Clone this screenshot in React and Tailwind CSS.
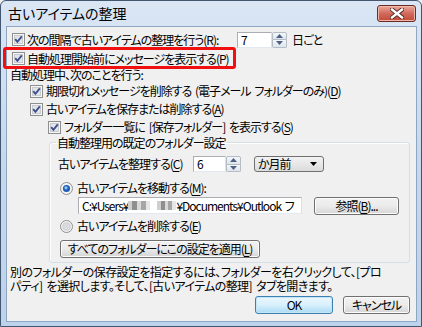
import React from 'react';

function Check() {
  return (
    <svg width="13" height="13" viewBox="0 0 13 13" className="shrink-0">
      <rect x="0.5" y="0.5" width="12" height="12" fill="#f6f6f6" stroke="#8e8f8f" />
      <rect x="2.5" y="2.5" width="8" height="8" fill="#e2e4e8" stroke="#c8cad0" />
      <path d="M3.2 6.2 L5.4 8.8 L9.8 3.4" stroke="#3d4f8d" strokeWidth="1.9" fill="none" />
    </svg>
  );
}

function Radio({ on }) {
  return (
    <svg width="13" height="13" viewBox="0 0 13 13" className="shrink-0">
      <circle cx="6.5" cy="6.5" r="6" fill="#f4f4f4" stroke="#8e8f8f" />
      {on ? (
        <>
          <circle cx="6.5" cy="6.5" r="3.6" fill="#1f5fb8" />
          <circle cx="6" cy="5.8" r="1.6" fill="#8fc4f4" />
        </>
      ) : (
        <circle cx="6.5" cy="6.5" r="4" fill="#d9dbde" stroke="#c4c6ca" strokeWidth="0.6" />
      )}
    </svg>
  );
}

function Spin() {
  return (
    <div className="flex flex-col w-[15px] h-[16px] shrink-0">
      <div className="flex-1 flex items-center justify-center border border-[#b4bcc6] rounded-t-[2px] bg-gradient-to-b from-[#f5f7fa] to-[#dfe5ec]">
        <svg width="7" height="4" viewBox="0 0 7 4"><path d="M0 4 L3.5 0 L7 4 Z" fill="#4d6185" /></svg>
      </div>
      <div className="flex-1 flex items-center justify-center border border-t-0 border-[#b4bcc6] rounded-b-[2px] bg-gradient-to-b from-[#f5f7fa] to-[#dfe5ec]">
        <svg width="7" height="4" viewBox="0 0 7 4"><path d="M0 0 L7 0 L3.5 4 Z" fill="#4d6185" /></svg>
      </div>
    </div>
  );
}

function Btn({ children, className = '', primary }) {
  return (
    <div
      className={
        'flex items-center justify-center h-[18px] rounded-[3px] border text-[12px] leading-[14px] whitespace-nowrap ' +
        (primary
          ? 'border-[#3c7fb1] bg-gradient-to-b from-[#eaf6fd] via-[#d9f0fc] to-[#a9dbf6] shadow-[inset_0_0_0_1px_#c4e5f6] '
          : 'border-[#707070] bg-gradient-to-b from-[#f2f2f2] via-[#ebebeb] to-[#d5d5d5] shadow-[inset_0_0_0_1px_#fcfcfc] ') +
        className
      }
    >
      {children}
    </div>
  );
}

function Mosaic({ w }) {
  return (
    <span
      className="inline-block shrink-0 h-[9px] bg-[linear-gradient(90deg,#cfcfcf_0_20%,#8f8f8f_20%_40%,#d9d9d9_40%_60%,#a6a6a6_60%_80%,#e6e6e6_80%)]"
      style={{ width: w }}
    />
  );
}

export default function App() {
  return (
    <div className="w-[422px] h-[327px] bg-[#f0f0f0] font-['Noto_Sans_CJK_JP',sans-serif] [font-feature-settings:'palt'] text-black">
      <div className="w-[422px] h-[327px] flex flex-col border border-[#425670] rounded-t-[6px] bg-gradient-to-b from-[#dae6f4] via-[#c6d8ee] to-[#bdd2eb]">
        {/* title bar */}
        <div className="h-[25px] shrink-0 flex items-start pl-[7px] pr-[5px]">
          <span className="mt-[4px] text-[14px] leading-[17px]">古いアイテムの整理</span>
          <div className="ml-auto mt-[4px] w-[39px] h-[17px] rounded-[3px] border border-[#6b2a26] bg-gradient-to-b from-[#e9a99b] via-[#d16a5b] to-[#c24a38] shadow-[inset_0_0_0_1px_#f1b8aa] flex items-center justify-center">
            <svg width="14" height="11" viewBox="0 0 14 11">
              <path d="M2 1.5 L12 9.5 M12 1.5 L2 9.5" stroke="#4a2420" strokeWidth="4.2" strokeLinecap="square" />
              <path d="M2 1.5 L12 9.5 M12 1.5 L2 9.5" stroke="#ffffff" strokeWidth="2.4" strokeLinecap="square" />
            </svg>
          </div>
        </div>

        {/* client area */}
        <div className="flex-1 ml-[5px] mr-[4px] mb-[4px] border border-[#8fa6c2] bg-[#f0f0f0] flex flex-col text-[12px] leading-[14px] tracking-[-1px] [word-spacing:2px]">
          {/* row 1 */}
          <div className="mt-[4px] h-[17px] flex items-center pl-[5px]">
            <Check />
            <span className="ml-[2px] w-[210px] whitespace-nowrap">
              次の間隔で古いアイテムの整理を行う(<u className="underline-offset-2">R</u>):
            </span>
            <div className="w-[35px] h-[16px] border border-[#abadb3] border-r-[#dbdfe6] border-b-[#e3e9ef] bg-white pl-[3px] flex items-center">7</div>
            <Spin />
            <span className="ml-[5px]">日ごと</span>
          </div>

          {/* row 2 with highlight */}
          <div className="relative mt-[2px] h-[17px] flex items-center pl-[5px]">
            <Check />
            <span className="ml-[2px] whitespace-nowrap">
              自動処理開始前にメッセージを表示する(<u className="underline-offset-2">P</u>)
            </span>
            <div className="absolute left-[-4px] top-[-3px] w-[233px] h-[22px] border-[3px] border-[#f01010] rounded-[3px]" />
          </div>

          <div className="h-[16px] flex items-center pl-[3px] whitespace-nowrap">自動処理中、次のことを行う:</div>

          <div className="h-[16px] flex items-center pl-[23px]">
            <Check />
            <span className="ml-[3px] whitespace-nowrap">
              期限切れメッセージを削除する (電子メール フォルダーのみ)(<u className="underline-offset-2">D</u>)
            </span>
          </div>

          <div className="mt-[2px] h-[16px] flex items-center pl-[23px]">
            <Check />
            <span className="ml-[3px] whitespace-nowrap">
              古いアイテムを保存または削除する(<u className="underline-offset-2">A</u>)
            </span>
          </div>

          <div className="mt-[2px] h-[16px] flex items-center pl-[41px]">
            <Check />
            <span className="ml-[3px] whitespace-nowrap">
              フォルダー一覧に [保存フォルダー] を表示する(<u className="underline-offset-2">S</u>)
            </span>
          </div>

          {/* group box */}
          <fieldset className="mt-[1px] ml-[42px] w-[361px] h-[127px] border border-[#d5dfe5] rounded-[3px] shadow-[inset_1px_1px_0_#ffffff]">
            <legend className="ml-[6px] px-[1px] h-[13px] leading-[13px] whitespace-nowrap">自動整理用の既定のフォルダー設定</legend>

            <div className="mt-[7px] h-[16px] flex items-center pl-[8px]">
              <span className="w-[135px] whitespace-nowrap">
                古いアイテムを整理する(<u className="underline-offset-2">C</u>)
              </span>
              <div className="w-[33px] h-[16px] border border-[#abadb3] border-r-[#dbdfe6] border-b-[#e3e9ef] bg-white pl-[3px] flex items-center">6</div>
              <Spin />
              <div className="ml-[13px] w-[70px] h-[16px] rounded-[3px] border border-[#707070] bg-gradient-to-b from-[#f2f2f2] to-[#dcdcdc] flex items-center pl-[3px] pr-[6px]">
                <span>か月前</span>
                <svg className="ml-auto" width="7" height="4" viewBox="0 0 7 4"><path d="M0 0 L7 0 L3.5 4 Z" fill="#000" /></svg>
              </div>
            </div>

            <div className="mt-[8px] h-[16px] flex items-center pl-[10px]">
              <Radio on />
              <span className="ml-[4px] whitespace-nowrap">
                古いアイテムを移動する(<u className="underline-offset-2">M</u>):
              </span>
            </div>

            <div className="mt-[1px] h-[17px] flex items-center pl-[28px]">
              <div className="w-[224px] h-[17px] border border-[#abadb3] border-r-[#dbdfe6] border-b-[#e3e9ef] bg-white pl-[3px] flex items-center overflow-hidden whitespace-nowrap">
                <span>C:¥Users¥</span>
                <Mosaic w={22} />
                <span className="w-[7px] shrink-0" />
                <Mosaic w={19} />
                <span>¥Documents¥Outlook フ</span>
              </div>
              <Btn className="ml-[12px] w-[85px]">参照(<u className="underline-offset-2">B</u>)...</Btn>
            </div>

            <div className="mt-[4px] h-[16px] flex items-center pl-[10px]">
              <Radio />
              <span className="ml-[4px] whitespace-nowrap">
                古いアイテムを削除する(<u className="underline-offset-2">E</u>)
              </span>
            </div>

            <Btn className="mt-[6px] ml-[10px] w-[200px]">
              すべてのフォルダーにこの設定を適用(<u className="underline-offset-2">L</u>)
            </Btn>
          </fieldset>

          <div className="mt-[2px] pl-[3px] whitespace-nowrap tracking-[-0.6px]">
            <div className="h-[14px]">別のフォルダーの保存設定を指定するには、フォルダーを右クリックして、[プロ</div>
            <div className="h-[14px]">パティ] を選択します。そして、[古いアイテムの整理] タブを開きます。</div>
          </div>

          <div className="mt-[3px] flex justify-end gap-[10px] pr-[6px]">
            <Btn primary className="w-[78px]">OK</Btn>
            <Btn className="w-[67px]">キャンセル</Btn>
          </div>
        </div>
      </div>
    </div>
  );
}
